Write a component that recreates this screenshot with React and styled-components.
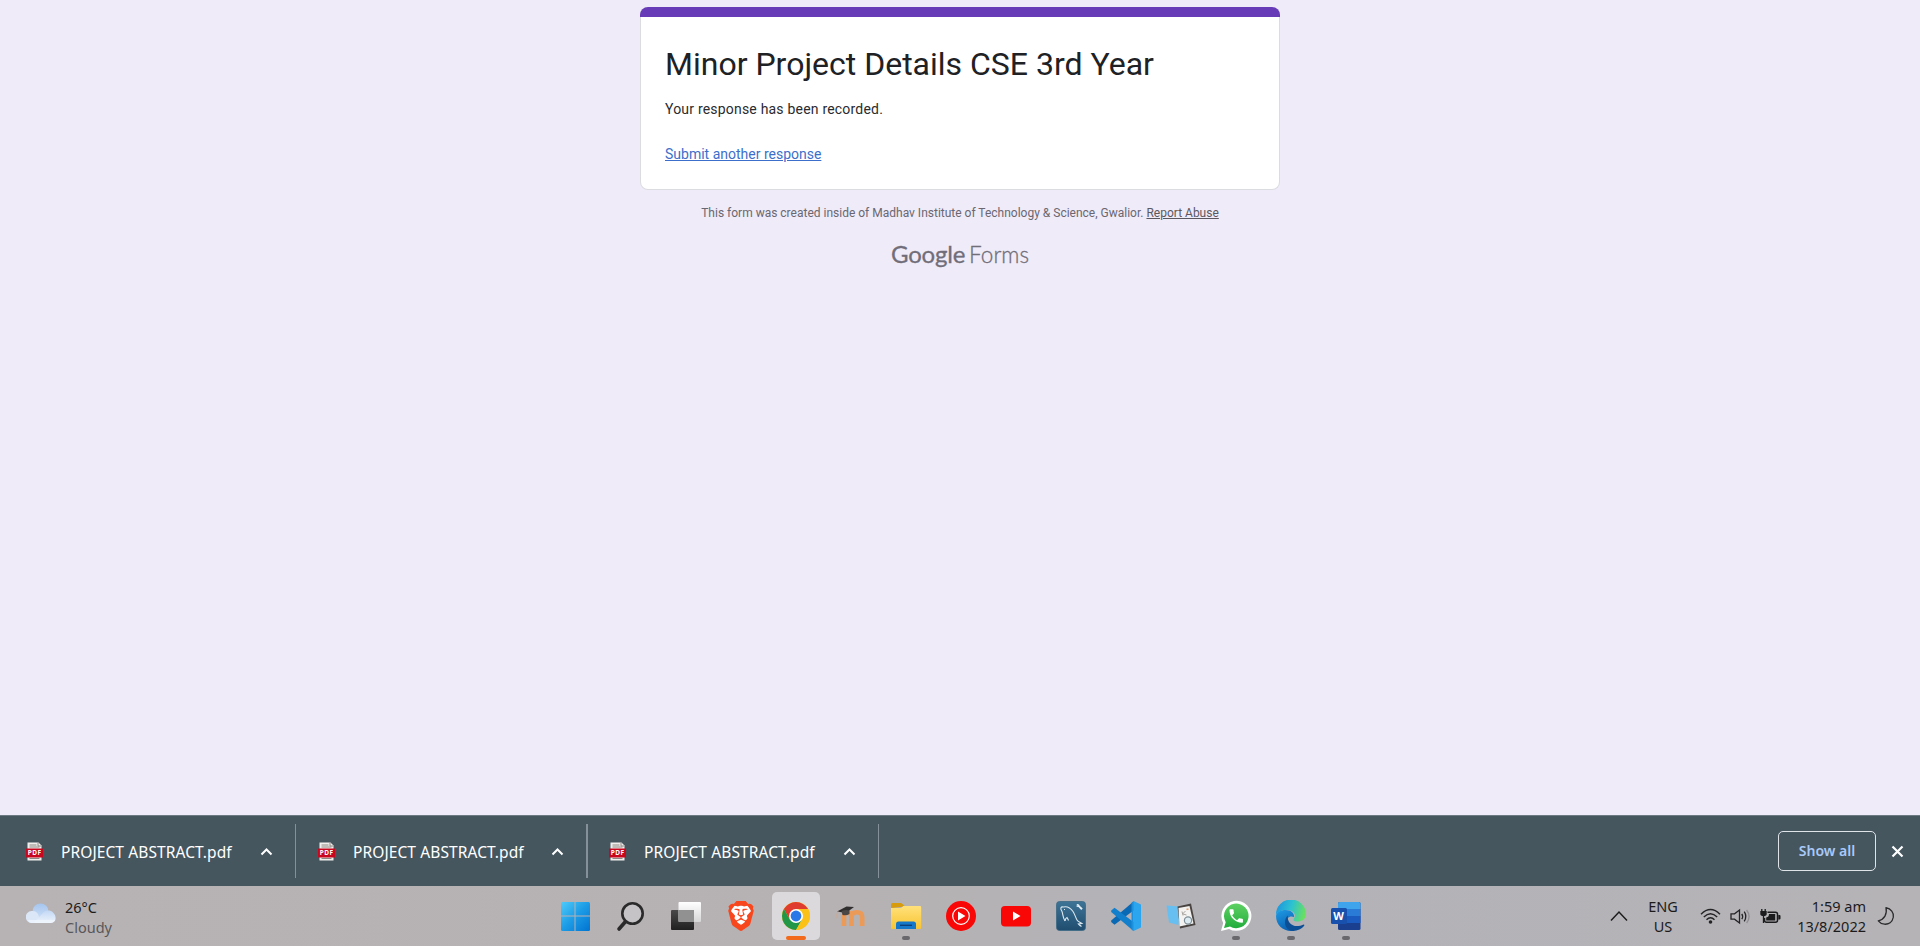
import React from "react";
import styled, { createGlobalStyle } from "styled-components";
import { SiBrave } from "react-icons/si";

const GlobalStyle = createGlobalStyle`
  *, *::before, *::after { box-sizing: border-box; }
  body { margin: 0; background: #efebf8; overflow: hidden; }
  svg { display: block; flex: none; }
`;

const Screen = styled.div`
  display: flex;
  flex-direction: column;
  height: 946px;
  width: 100%;
  background: #efebf8;
  font-family: Roboto, "Liberation Sans", sans-serif;
`;

/* ---------- Form page ---------- */

const FormPage = styled.main`
  flex: 1;
  display: flex;
  flex-direction: column;
  align-items: center;
  padding-top: 7px;
`;

const Card = styled.section`
  width: 640px;
  height: 183px;
  display: flex;
  flex-direction: column;
  background: #fff;
  border: 1px solid #dadce0;
  border-top: 0;
  border-radius: 8px;
`;

const CardAccent = styled.div`
  height: 10px;
  flex: none;
  margin: 0 -1px;
  background: #673ab7;
  border-radius: 8px 8px 0 0;
`;

const CardBody = styled.div`
  display: flex;
  flex-direction: column;
  align-items: flex-start;
  padding: 26px 24px 0;
`;

const Title = styled.h1`
  margin: 0;
  font-size: 32px;
  line-height: 43px;
  font-weight: 400;
  color: #202124;
  white-space: nowrap;
`;

const Message = styled.p`
  margin: 13px 0 0;
  font-size: 14px;
  line-height: 20px;
  letter-spacing: 0.2px;
  color: #2a2b2e;
`;

const ResponseLink = styled.a`
  margin-top: 25px;
  font-size: 14px;
  line-height: 20px;
  color: #3c6fcb;
  text-decoration: underline;
`;

const Disclaimer = styled.p`
  margin: 14px 0 0;
  font-size: 12px;
  line-height: 18px;
  color: #6a6771;
  white-space: nowrap;
`;

const AbuseLink = styled.a`
  color: #5b5862;
  text-decoration: underline;
`;

const Brand = styled.div`
  display: flex;
  align-items: baseline;
  gap: 4px;
  margin-top: 15px;
  font-family: Lato, "Open Sans", sans-serif;
  font-size: 24px;
  line-height: 34px;
  color: #716e79;
`;

const BrandName = styled.span`
  font-weight: 400;
  letter-spacing: -0.2px;
  -webkit-text-stroke: 0.3px #716e79;
`;

const BrandProduct = styled.span`
  font-weight: 300;
  font-size: 22.5px;
  -webkit-text-stroke: 0.3px #716e79;
`;

/* ---------- Download shelf ---------- */

const Shelf = styled.section`
  display: flex;
  align-items: center;
  height: 71px;
  flex: none;
  padding-right: 16px;
  background: #45565f;
  border-top: 1px solid #6c7982;
  font-family: "Noto Sans", "Open Sans", sans-serif;
`;

const DownloadItem = styled.div`
  display: flex;
  align-items: center;
  width: ${(p) => p.$width}px;
  height: 54px;
  padding-left: ${(p) => p.$inset}px;
  padding-right: 22px;
  border-right: ${(p) => p.$rule}px solid #84919a;
`;

const FileName = styled.span`
  flex: 1;
  margin-left: 18px;
  padding-top: 1px;
  font-size: 15.5px;
  line-height: 22px;
  letter-spacing: 0.1px;
  color: #fff;
  white-space: nowrap;
`;

const Spacer = styled.div`
  flex: 1;
`;

const ShowAll = styled.button`
  width: 98px;
  height: 40px;
  margin: 0 15px 0 0;
  padding: 0 0 1px;
  border: 1px solid #dfe4e8;
  border-radius: 5px;
  background: transparent;
  color: #a9c9f8;
  font: 600 14px/20px "Noto Sans", "Open Sans", sans-serif;
`;

/* ---------- Taskbar ---------- */

const Taskbar = styled.footer`
  display: grid;
  grid-template-columns: 551px 820px 1fr;
  height: 60px;
  flex: none;
  background: linear-gradient(90deg, #b7b3b4 0%, #b6b2b3 45%, #b3b2b7 60%, #b5b3b6 100%);
  font-family: "Noto Sans", "Open Sans", sans-serif;
`;

const Weather = styled.div`
  display: flex;
  align-items: flex-start;
  gap: 9px;
  padding: 11px 0 0 26px;
`;

const WeatherIcon = styled.div`
  padding-top: 6px;
`;

const Lines = styled.div`
  display: flex;
  flex-direction: column;
  align-items: ${(p) => p.$align || "flex-start"};
  font-size: 14.5px;
  line-height: 20px;
  color: #1c1b1c;
  white-space: nowrap;
`;

const Muted = styled.span`
  color: #59575a;
`;

const Apps = styled.nav`
  display: flex;
  gap: 7px;
  padding: 6px 0 0 1px;
`;

const AppButton = styled.div`
  display: flex;
  flex-direction: column;
  align-items: center;
  justify-content: space-between;
  flex: none;
  width: 48px;
  height: 48px;
  padding-top: 8px;
  border-radius: 5px;
  background: ${(p) => (p.$active ? "#dbd9db" : "transparent")};
`;

const Indicator = styled.div`
  width: ${(p) => (p.$active ? 20 : 8)}px;
  height: 4px;
  border-radius: 2px;
  background: ${(p) => (p.$active ? "#f26a1b" : "#69686c")};
`;

const Tray = styled.div`
  display: flex;
  align-items: flex-start;
  justify-content: flex-end;
  padding: 10px 25px 0 0;
`;

const TrayIcon = styled.div`
  display: flex;
  align-items: center;
  height: 40px;
  margin-right: ${(p) => p.$after || 0}px;
`;

const TrayText = styled.div`
  width: ${(p) => p.$width}px;
  margin-right: ${(p) => p.$after}px;
`;

/* ---------- Icons ---------- */

const PdfLabel = styled.text`
  font: 700 6.5px "Noto Sans", sans-serif;
  fill: #fff;
`;

const WordLabel = styled.text`
  font: 700 11px "Noto Sans", sans-serif;
  fill: #fff;
`;

const PdfIcon = () => (
  <svg width="17" height="19" viewBox="0 0 17 19">
    <path d="M1.500 .5h11l3 3v15h-14z" fill="#f1efed" />
    <path d="M12 .5v3.500h3.500" fill="none" stroke="#8d8884" strokeWidth="1" />
    <path d="M3.500 3h7M3.500 5h10M3.500 16.500h10" stroke="#8d8884" strokeWidth="1" />
    <rect x="0" y="6.500" width="17" height="9" rx=".5" fill="#c8061d" />
    <PdfLabel x="1.700" y="13.300" textLength="13.500">PDF</PdfLabel>
  </svg>
);

const ShelfChevron = () => (
  <svg width="13" height="9" viewBox="0 0 13 9">
    <path d="M1.500 7.500 6.500 2.500l5 5" fill="none" stroke="#fff" strokeWidth="2" />
  </svg>
);

const CloseIcon = () => (
  <svg width="13" height="13" viewBox="0 0 13 13">
    <path d="M1.500 1.500l10 10M11.500 1.500l-10 10" stroke="#fff" strokeWidth="2.200" />
  </svg>
);

const CloudIcon = () => (
  <svg width="30" height="21" viewBox="0 0 30 21">
    <defs>
      <linearGradient id="cloudBack" x1="0" y1="0" x2="0" y2="1">
        <stop offset="0" stopColor="#a5c5ef" />
        <stop offset="1" stopColor="#cfe0f6" />
      </linearGradient>
      <linearGradient id="cloudFront" x1="0" y1="0" x2="0" y2="1">
        <stop offset="0" stopColor="#c3d8f5" />
        <stop offset="1" stopColor="#eef4fb" />
      </linearGradient>
    </defs>
    <circle cx="14.500" cy="8.500" r="8" fill="url(#cloudBack)" />
    <path d="M6 20a6 6 0 0 1-.5-12c3-.5 5 .8 6.500 3l3 9z" fill="#dbe7f7" />
    <path d="M8 20c2-3 5-6 8-9 3-4 8-4.500 11-1.500 4 3.500 3.500 10.500-2.500 10.500z" fill="url(#cloudFront)" />
    <path d="M2 17q1 3 4 3h18.500q3 0 4.500-3z" fill="#eff5fc" opacity=".8" />
  </svg>
);

const WindowsIcon = () => (
  <svg width="32" height="32" viewBox="0 0 32 32">
    <defs>
      <linearGradient id="win" gradientUnits="userSpaceOnUse" x1="1" y1="1" x2="31" y2="31">
        <stop offset="0" stopColor="#4fcdfb" />
        <stop offset=".5" stopColor="#1c9be6" />
        <stop offset="1" stopColor="#0072cf" />
      </linearGradient>
    </defs>
    <g fill="url(#win)">
      <path d="M2.500 2h12v13.500H1V3.500Q1 2 2.500 2z" />
      <path d="M15.500 2h13q1.500 0 1.500 1.500v12H15.500z" />
      <path d="M1 16.500h13.500V31h-12Q1 31 1 29.500z" />
      <path d="M15.500 16.500H30v13Q30 31 28.500 31h-13z" />
    </g>
  </svg>
);

const SearchIcon = () => (
  <svg width="32" height="32" viewBox="0 0 32 32">
    <path d="M11 21 4 29" stroke="#2b2a2b" strokeWidth="3.600" strokeLinecap="round" />
    <circle cx="17.500" cy="13.500" r="10.200" fill="#c5c3c5" stroke="#2b2a2b" strokeWidth="2.600" />
  </svg>
);

const TaskViewIcon = () => (
  <svg width="32" height="32" viewBox="0 0 32 32">
    <defs>
      <linearGradient id="tvBack" x1="0" y1="0" x2="0" y2="1">
        <stop offset="0" stopColor="#4a494a" />
        <stop offset="1" stopColor="#202020" />
      </linearGradient>
      <linearGradient id="tvFront" x1="0" y1="0" x2="0" y2="1">
        <stop offset="0" stopColor="#fff" />
        <stop offset="1" stopColor="#d8d7d8" />
      </linearGradient>
    </defs>
    <rect x="1" y="10" width="23" height="20" rx="1" fill="url(#tvBack)" />
    <rect x="8.500" y="2" width="22.500" height="20" rx="1" fill="url(#tvFront)" />
    <path d="M8.500 10H24v12H9.500q-1 0-1-1z" fill="#929192" />
  </svg>
);

const BraveStack = styled.div`
  display: grid;
  place-items: center;
  width: 32px;
  height: 32px;

  > svg {
    grid-area: 1 / 1;
  }
`;

const BraveIcon = () => (
  <BraveStack>
    <svg width="32" height="32" viewBox="0 0 32 32">
      <path d="M9 6h14l4 6-4 12-7 5-7-5-4-12z" fill="#fff" />
    </svg>
    <SiBrave size={30} color="#f8471d" />
  </BraveStack>
);

const ChromeIcon = () => (
  <svg width="32" height="32" viewBox="0 0 32 32">
    <circle cx="16" cy="16" r="14" fill="#fbc116" />
    <path d="M3.876 9A14 14 0 0 1 28.124 9H16L9.940 19.500z" fill="#df3b2f" />
    <path d="M3.876 9A14 14 0 0 0 16 30l6.060-10.500H9.940z" fill="#229747" />
    <path d="M16 9h12.124A14 14 0 0 1 16 30l6.060-10.500z" fill="#fbc116" />
    <circle cx="16" cy="16" r="7" fill="#fff" />
    <circle cx="16" cy="16" r="5.400" fill="#2a78e8" />
  </svg>
);

const MoodleIcon = () => (
  <svg width="32" height="32" viewBox="0 0 32 32">
    <path
      d="M9 26V16q0-3.500 3.500-3.500 4 0 4 4V26M16.500 17q0-4.800 5.200-4.800 5.500 0 5.500 5V26"
      fill="none"
      stroke="#ec9a58"
      strokeWidth="4.600"
    />
    <path d="M2 11.500 11.500 6.500l7.500.500L11 13z" fill="#2f2d2d" />
    <path d="M6.500 11q4-1.500 8-.5v3.500q-3 2-7 1z" fill="#4b4746" />
    <path d="M3 11.500q-2 3-.8 7" stroke="#cfa98c" strokeWidth="1" fill="none" />
  </svg>
);

const FolderIcon = () => (
  <svg width="32" height="32" viewBox="0 0 32 32">
    <defs>
      <linearGradient id="folder" x1="0" y1="0" x2="0" y2="1">
        <stop offset="0" stopColor="#ffe17a" />
        <stop offset="1" stopColor="#f9c433" />
      </linearGradient>
    </defs>
    <path d="M1 8V4.500Q1 3 2.500 3h8q1 0 2 1l2.500 2.500z" fill="#d79b0c" />
    <path d="M1 8h10l2.500-2H30q1.200 0 1.200 1.200V27.500q0 1.500-1.500 1.500H2.500Q1 29 1 27.500z" fill="url(#folder)" />
    <path d="M6 29v-5q0-2.500 2.500-2.500h15q2.500 0 2.500 2.500v5z" fill="#1477c9" />
    <path d="M10 25.300h12" stroke="#0a3f7c" strokeWidth="1.400" />
  </svg>
);

const YouTubeMusicIcon = () => (
  <svg width="32" height="32" viewBox="0 0 32 32">
    <circle cx="16" cy="16" r="15" fill="#f90606" />
    <circle cx="16" cy="16" r="8.300" fill="none" stroke="#fff" strokeWidth="1.200" />
    <path d="M13 11.500 20.500 16 13 20.500z" fill="#fff" />
  </svg>
);

const YouTubeIcon = () => (
  <svg width="32" height="32" viewBox="0 0 32 32">
    <rect x="1" y="6" width="30" height="20.500" rx="4" fill="#f90606" />
    <path d="M13 11.500 20.500 16 13 20.500z" fill="#fff" />
  </svg>
);

const MySqlIcon = () => (
  <svg width="32" height="32" viewBox="0 0 32 32">
    <defs>
      <linearGradient id="mysql" x1="0" y1="0" x2="0" y2="1">
        <stop offset="0" stopColor="#3e7496" />
        <stop offset="1" stopColor="#1f4d70" />
      </linearGradient>
    </defs>
    <rect x="1.500" y="1.500" width="29" height="29" rx="3" fill="url(#mysql)" stroke="#3b6985" strokeWidth=".8" />
    <g fill="none" stroke="#dce8ef" strokeWidth="1.100">
      <path d="M10 21C7.500 17 8 14 7 11.500 5 8.500 5.500 6.500 8.500 7c3.500-1 7 1 9.500 4.500 2 3 2.500 6 4 8.500 1 2 3 2 5 3.500l-3.500.500q1.500 1.500 3 2.500" />
      <path d="M10 21q.5-3 2-3.500 1 1.500 1.500 3M9 9.500h1" />
    </g>
    <path d="M21.500 4q3-.5 3.200 1.800l3 2.700-1.500 1.500-2.700-3q-2.500 0-2.200-1.500l1.200.200z" fill="#e4edf2" />
  </svg>
);

const VsCodeIcon = () => (
  <svg width="32" height="32" viewBox="0 0 32 32">
    <path d="M23.500 1.500v9L4.500 24.800 1.200 22V20.500z" fill="#0a69b4" />
    <path d="M1.200 10.500 4.500 7.800 23.500 22v9L1.200 12z" fill="#127fcd" />
    <path d="M23.500 1 31 4.500v23L23.500 31z" fill="#2ba5ee" />
    <path d="M23.500 1 21.500 2.700V29.300L23.500 31z" fill="#1d90dd" />
  </svg>
);

const NotesIcon = () => (
  <svg width="32" height="32" viewBox="0 0 32 32">
    <path d="M1.500 5.500 14 6.500 13.500 25 4 22.500z" fill="#66bff0" />
    <path d="M12.500 6.500 26 3.500 30.500 25 15 28.500z" fill="#4a4542" />
    <path d="M13.500 8 24.500 6 28.500 23.500 14.500 26.500z" fill="#f4f3f1" />
    <path d="M17 11.500l1 4M17.500 14l3-3M18 14l3.500 1" stroke="#a9a5a2" strokeWidth="1" />
    <path d="M21.500 9.500l2-.5" stroke="#e5a070" strokeWidth="1.500" />
    <circle cx="23" cy="20.500" r="3.600" fill="#dcebf1" stroke="#7f9099" strokeWidth="1.200" />
  </svg>
);

const WhatsAppIcon = () => (
  <svg width="32" height="32" viewBox="0 0 32 32">
    <defs>
      <linearGradient id="wa" x1="0" y1="0" x2="0" y2="1">
        <stop offset="0" stopColor="#5fd163" />
        <stop offset="1" stopColor="#22ad3c" />
      </linearGradient>
    </defs>
    <path d="M1 31 3.200 23A15 15 0 1 1 9 28.900z" fill="#fff" />
    <path d="M4 28 5.700 22.200A12.300 12.300 0 1 1 10 26.500z" fill="url(#wa)" />
    <path
      transform="translate(7.200 7.100) scale(.75)"
      d="M6.620 10.790c1.440 2.830 3.760 5.140 6.590 6.590l2.200-2.200c.27-.27.67-.36 1.020-.24 1.120.37 2.330.57 3.570.57.55 0 1 .45 1 1V20c0 .55-.45 1-1 1-9.390 0-17-7.610-17-17 0-.55.45-1 1-1h3.500c.55 0 1 .45 1 1 0 1.250.2 2.450.57 3.570.11.35.03.74-.25 1.020l-2.200 2.200z"
      fill="#fff"
    />
  </svg>
);

const EdgeIcon = () => (
  <svg width="32" height="32" viewBox="0 0 32 32">
    <defs>
      <linearGradient id="edgeTop" x1="0" y1=".3" x2="1" y2=".5">
        <stop offset="0" stopColor="#1c95df" />
        <stop offset=".5" stopColor="#2dc2d0" />
        <stop offset="1" stopColor="#6be05d" />
      </linearGradient>
      <linearGradient id="edgeLeft" x1="0" y1="0" x2=".4" y2="1">
        <stop offset="0" stopColor="#1f9be4" />
        <stop offset="1" stopColor="#0b63b5" />
      </linearGradient>
    </defs>
    <path d="M1 15A15 15 0 0 1 31 14c0 5-4 7.500-8.500 7.500-4 0-4.500-1.500-3.500-3 3-5-2-8.500-7-8.500S2 12 1 15z" fill="url(#edgeTop)" />
    <path d="M1 16c.5-4 5-6 9.500-6 6 0 9 3.500 8.500 7-5-2-8 2-7 6 1 4.500 4 7 7.500 7.700C9 32.500 1 25.500 1 16z" fill="url(#edgeLeft)" />
    <path d="M13 15.500c-1.500 6 4 11.500 10.500 10.500 2.500-.3 4.500-1.500 5.200-1.500.8 0 .8.800.3 1.500-3 4-9.500 6-14.500 4.300C8.500 27 9 18.500 13 15.500z" fill="#0d4f94" />
  </svg>
);

const WordIcon = () => (
  <svg width="32" height="32" viewBox="0 0 32 32">
    <rect x="8" y="2" width="22.500" height="28" rx="1.500" fill="#1a3f8e" />
    <path d="M8 9V3.500Q8 2 9.500 2H29q1.500 0 1.500 1.500V9z" fill="#3fa4ec" />
    <path d="M8 9h22.500v7H8z" fill="#2a7bd5" />
    <path d="M8 16h22.500v7H8z" fill="#1b5abf" />
    <rect x="1" y="8" width="16" height="16" rx="1.500" fill="#1750ad" />
    <WordLabel x="3.200" y="20">W</WordLabel>
  </svg>
);

const TrayChevron = () => (
  <svg width="18" height="12" viewBox="0 0 18 12">
    <path d="M1 10.500 9 2l8 8.500" fill="none" stroke="#1d1c1d" strokeWidth="1.500" />
  </svg>
);

const WifiIcon = () => (
  <svg width="21" height="17" viewBox="0 0 21 17">
    <g fill="none" stroke="#242325" strokeWidth="1.400">
      <path d="M1 6.200Q10.500-3.200 20 6.200" />
      <path d="M3.800 9Q10.500 2.300 17.200 9" />
      <path d="M6.500 11.800Q10.500 7.800 14.500 11.800" />
    </g>
    <circle cx="10.500" cy="14" r="1.800" fill="#242325" />
  </svg>
);

const SpeakerIcon = () => (
  <svg width="20" height="17" viewBox="0 0 20 17">
    <g fill="none" stroke="#242325" strokeWidth="1.300">
      <path d="M1 5.800h3.500L9.500 2v13L4.500 11.200H1z" />
      <path d="M11.800 5.800q1.700 2.700 0 5.400M14.200 3.700q3.300 4.800 0 9.600" />
      <path d="M16.600 2q5 6.500 0 13" stroke="#908e92" />
    </g>
  </svg>
);

const BatteryIcon = () => (
  <svg width="21" height="17" viewBox="0 0 21 17">
    <path d="M7.500 4.200h8q2 0 2 2v6q0 2-2 2h-9q-2 0-2-2V10" fill="none" stroke="#1c1b1d" strokeWidth="1.500" />
    <path d="M9 6h6.200v6.500h-9V9.500Q9 9 9 6z" fill="#1c1b1d" />
    <path d="M18.300 7h1.200q1 0 1 1v2.500q0 1-1 1h-1.200z" fill="#1c1b1d" />
    <path d="M1.800 1v3M5.200 1v3M3.500 7v8" stroke="#1c1b1d" strokeWidth="1.300" />
    <path d="M.3 3h6.400v3q0 2-3.200 2T.3 6z" fill="#1c1b1d" />
  </svg>
);

const MoonIcon = () => (
  <svg width="18" height="20" viewBox="0 0 18 20">
    <path
      d="M9 1.700c5 1 8 5 7.300 9.500-.9 5-4.800 7.300-8.800 7-2.600-.2-4.700-1.500-6.200-3.400C7.500 13.500 10.300 8 9 1.700z"
      fill="none"
      stroke="#2a292b"
      strokeWidth="1.300"
      strokeLinejoin="round"
    />
  </svg>
);

const downloads = [
  { name: "PROJECT ABSTRACT.pdf", width: 296, inset: 26, rule: 1 },
  { name: "PROJECT ABSTRACT.pdf", width: 292, inset: 22, rule: 2 },
  { name: "PROJECT ABSTRACT.pdf", width: 291, inset: 21, rule: 1 },
];

const apps = [
  { id: "start", Icon: WindowsIcon },
  { id: "search", Icon: SearchIcon },
  { id: "taskview", Icon: TaskViewIcon },
  { id: "brave", Icon: BraveIcon },
  { id: "chrome", Icon: ChromeIcon, active: true },
  { id: "moodle", Icon: MoodleIcon },
  { id: "explorer", Icon: FolderIcon, running: true },
  { id: "ytmusic", Icon: YouTubeMusicIcon },
  { id: "youtube", Icon: YouTubeIcon },
  { id: "mysql", Icon: MySqlIcon },
  { id: "vscode", Icon: VsCodeIcon },
  { id: "notes", Icon: NotesIcon },
  { id: "whatsapp", Icon: WhatsAppIcon, running: true },
  { id: "edge", Icon: EdgeIcon, running: true },
  { id: "word", Icon: WordIcon, running: true },
];

export default function App() {
  return (
    <Screen>
      <GlobalStyle />
      <FormPage>
        <Card>
          <CardAccent />
          <CardBody>
            <Title>Minor Project Details CSE 3rd Year</Title>
            <Message>Your response has been recorded.</Message>
            <ResponseLink>Submit another response</ResponseLink>
          </CardBody>
        </Card>
        <Disclaimer>
          This form was created inside of Madhav Institute of Technology &amp; Science, Gwalior.{" "}
          <AbuseLink>Report Abuse</AbuseLink>
        </Disclaimer>
        <Brand>
          <BrandName>Google</BrandName>
          <BrandProduct>Forms</BrandProduct>
        </Brand>
      </FormPage>

      <Shelf>
        {downloads.map((file, i) => (
          <DownloadItem key={i} $width={file.width} $inset={file.inset} $rule={file.rule}>
            <PdfIcon />
            <FileName>{file.name}</FileName>
            <ShelfChevron />
          </DownloadItem>
        ))}
        <Spacer />
        <ShowAll>Show all</ShowAll>
        <CloseIcon />
      </Shelf>

      <Taskbar>
        <Weather>
          <WeatherIcon>
            <CloudIcon />
          </WeatherIcon>
          <Lines>
            <span>26°C</span>
            <Muted>Cloudy</Muted>
          </Lines>
        </Weather>
        <Apps>
          {apps.map(({ id, Icon, active, running }) => (
            <AppButton key={id} $active={active}>
              <Icon />
              {(active || running) && <Indicator $active={active} />}
            </AppButton>
          ))}
        </Apps>
        <Tray>
          <TrayIcon $after={19}>
            <TrayChevron />
          </TrayIcon>
          <TrayText $width={32} $after={21}>
            <Lines $align="center">
              <span>ENG</span>
              <span>US</span>
            </Lines>
          </TrayText>
          <TrayIcon $after={9}>
            <WifiIcon />
          </TrayIcon>
          <TrayIcon $after={10}>
            <SpeakerIcon />
          </TrayIcon>
          <TrayIcon $after={15}>
            <BatteryIcon />
          </TrayIcon>
          <TrayText $width={70} $after={11}>
            <Lines $align="flex-end">
              <span>1:59 am</span>
              <span>13/8/2022</span>
            </Lines>
          </TrayText>
          <TrayIcon>
            <MoonIcon />
          </TrayIcon>
        </Tray>
      </Taskbar>
    </Screen>
  );
}
